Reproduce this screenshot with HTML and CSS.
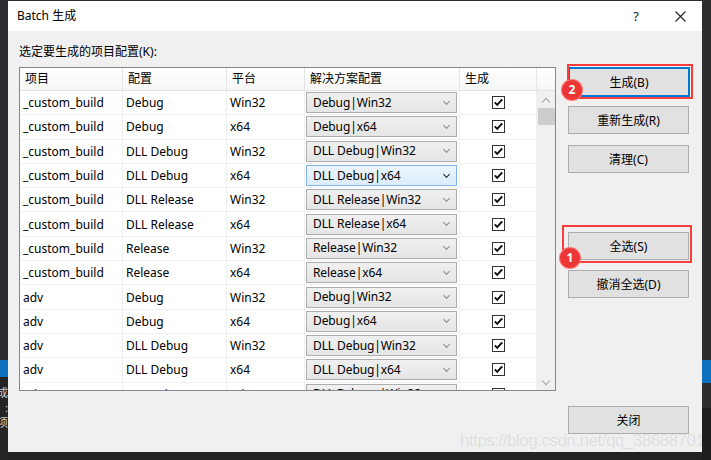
FILE: index.html
```html
<!DOCTYPE html>
<html lang="zh-CN">
<head>
    <meta charset="UTF-8">
    <title>Batch 生成</title>
    <link rel="stylesheet" href="styles.css">
</head>
<body>
<div class="desktop">
    <!-- VS window behind, left edge -->
    <div class="edge-left">
        <div class="edge-dark"></div>
        <div class="edge-blue"></div>
        <div class="edge-text">
            <span>成</span>
            <span>:</span>
            <span>项</span>
        </div>
    </div>

    <div class="middle">
        <div class="top-line"></div>

        <div class="dialog">
            <div class="titlebar">
                <span class="title">Batch 生成</span>
                <span class="help">?</span>
                <svg class="close" width="11" height="11" viewBox="0 0 11 11">
                    <path d="M0.5 0.5 L10.5 10.5 M10.5 0.5 L0.5 10.5" stroke="#222" stroke-width="1.1" fill="none"/>
                </svg>
            </div>

            <div class="content">
                <div class="left">
                    <div class="caption">选定要生成的项目配置(K):</div>

                    <div class="table">
                        <div class="thead">
                            <div class="th">项目</div>
                            <div class="th">配置</div>
                            <div class="th">平台</div>
                            <div class="th">解决方案配置</div>
                            <div class="th">生成</div>
                            <div class="th th-corner"></div>
                        </div>

                        <div class="tbody">
                            <div class="rows">
                                <div class="row">
                                    <div class="cell">_custom_build</div><div class="cell">Debug</div><div class="cell">Win32</div>
                                    <div class="cell cell-combo"><div class="combo"><span>Debug|Win32</span><i class="chev"></i></div></div>
                                    <div class="cell cell-check"><span class="check"></span></div>
                                </div>
                                <div class="row">
                                    <div class="cell">_custom_build</div><div class="cell">Debug</div><div class="cell">x64</div>
                                    <div class="cell cell-combo"><div class="combo"><span>Debug|x64</span><i class="chev"></i></div></div>
                                    <div class="cell cell-check"><span class="check"></span></div>
                                </div>
                                <div class="row">
                                    <div class="cell">_custom_build</div><div class="cell">DLL Debug</div><div class="cell">Win32</div>
                                    <div class="cell cell-combo"><div class="combo"><span>DLL Debug|Win32</span><i class="chev"></i></div></div>
                                    <div class="cell cell-check"><span class="check"></span></div>
                                </div>
                                <div class="row">
                                    <div class="cell">_custom_build</div><div class="cell">DLL Debug</div><div class="cell">x64</div>
                                    <div class="cell cell-combo"><div class="combo combo-hot"><span>DLL Debug|x64</span><i class="chev"></i></div></div>
                                    <div class="cell cell-check"><span class="check"></span></div>
                                </div>
                                <div class="row">
                                    <div class="cell">_custom_build</div><div class="cell">DLL Release</div><div class="cell">Win32</div>
                                    <div class="cell cell-combo"><div class="combo"><span>DLL Release|Win32</span><i class="chev"></i></div></div>
                                    <div class="cell cell-check"><span class="check"></span></div>
                                </div>
                                <div class="row">
                                    <div class="cell">_custom_build</div><div class="cell">DLL Release</div><div class="cell">x64</div>
                                    <div class="cell cell-combo"><div class="combo"><span>DLL Release|x64</span><i class="chev"></i></div></div>
                                    <div class="cell cell-check"><span class="check"></span></div>
                                </div>
                                <div class="row">
                                    <div class="cell">_custom_build</div><div class="cell">Release</div><div class="cell">Win32</div>
                                    <div class="cell cell-combo"><div class="combo"><span>Release|Win32</span><i class="chev"></i></div></div>
                                    <div class="cell cell-check"><span class="check"></span></div>
                                </div>
                                <div class="row">
                                    <div class="cell">_custom_build</div><div class="cell">Release</div><div class="cell">x64</div>
                                    <div class="cell cell-combo"><div class="combo"><span>Release|x64</span><i class="chev"></i></div></div>
                                    <div class="cell cell-check"><span class="check"></span></div>
                                </div>
                                <div class="row">
                                    <div class="cell">adv</div><div class="cell">Debug</div><div class="cell">Win32</div>
                                    <div class="cell cell-combo"><div class="combo"><span>Debug|Win32</span><i class="chev"></i></div></div>
                                    <div class="cell cell-check"><span class="check"></span></div>
                                </div>
                                <div class="row">
                                    <div class="cell">adv</div><div class="cell">Debug</div><div class="cell">x64</div>
                                    <div class="cell cell-combo"><div class="combo"><span>Debug|x64</span><i class="chev"></i></div></div>
                                    <div class="cell cell-check"><span class="check"></span></div>
                                </div>
                                <div class="row">
                                    <div class="cell">adv</div><div class="cell">DLL Debug</div><div class="cell">Win32</div>
                                    <div class="cell cell-combo"><div class="combo"><span>DLL Debug|Win32</span><i class="chev"></i></div></div>
                                    <div class="cell cell-check"><span class="check"></span></div>
                                </div>
                                <div class="row">
                                    <div class="cell">adv</div><div class="cell">DLL Debug</div><div class="cell">x64</div>
                                    <div class="cell cell-combo"><div class="combo"><span>DLL Debug|x64</span><i class="chev"></i></div></div>
                                    <div class="cell cell-check"><span class="check"></span></div>
                                </div>
                                <div class="row">
                                    <div class="cell">adv</div><div class="cell">DLL Release</div><div class="cell">Win32</div>
                                    <div class="cell cell-combo"><div class="combo"><span>DLL Release|Win32</span><i class="chev"></i></div></div>
                                    <div class="cell cell-check"><span class="check"></span></div>
                                </div>
                            </div>

                            <div class="scrollbar">
                                <div class="sb-btn"><i class="sb-arrow sb-up"></i></div>
                                <div class="sb-thumb"></div>
                                <div class="sb-track"></div>
                                <div class="sb-btn"><i class="sb-arrow sb-down"></i></div>
                            </div>
                        </div>
                    </div>
                </div>

                <div class="actions">
                    <div class="mark">
                        <button class="btn btn-default">生成(B)</button>
                        <span class="frame frame-build"></span>
                        <span class="badge badge-build">2</span>
                    </div>
                    <button class="btn btn-rebuild">重新生成(R)</button>
                    <button class="btn btn-clean">清理(C)</button>
                    <div class="mark mark-all">
                        <button class="btn">全选(S)</button>
                        <span class="frame frame-all"></span>
                        <span class="badge badge-all">1</span>
                    </div>
                    <button class="btn btn-none">撤消全选(D)</button>
                    <button class="btn btn-close">关闭</button>
                </div>
            </div>

            <div class="watermark">https://blog.csdn.net/qq_38688701</div>
        </div>

        <div class="edge-bottom"></div>
    </div>

    <!-- VS window behind, right edge -->
    <div class="edge-right">
        <div class="edge-dark"></div>
        <div class="edge-blue edge-blue-r"></div>
        <div class="edge-mid"></div>
        <div class="edge-low"></div>
    </div>
</div>
</body>
</html>
```

FILE: styles.css
```css
body {
    margin: 0;
    background: #2d2d30;
    font-family: "Noto Sans", "Noto Sans CJK SC", sans-serif;
    font-size: 12px;
    color: #000;
}

.desktop {
    display: flex;
    height: 460px;
    overflow: hidden;
}

/* edges of the window behind */
.edge-left {
    width: 8px;
    display: flex;
    flex-direction: column;
}

.edge-dark {
    height: 360px;
    background: #2d2d30;
}

.edge-blue {
    height: 17px;
    background: #0e70c0;
}

.edge-text {
    flex: 1;
    background: #252526;
    color: #d0d0d0;
    display: flex;
    flex-direction: column;
    align-items: flex-end;
    gap: 3px;
    padding-top: 10px;
    font-size: 11px;
    line-height: 12px;
    overflow: hidden;
}

.edge-right {
    flex: 1;
    display: flex;
    flex-direction: column;
}

.edge-blue-r {
    height: 23px;
}

.edge-mid {
    height: 25px;
    background: #2d2d30;
}

.edge-low {
    flex: 1;
    background: #1e1e1e;
}

.middle {
    width: 694px;
    display: flex;
    flex-direction: column;
}

.top-line {
    height: 1px;
    background: #2b2b2b;
}

.edge-bottom {
    flex: 1;
    background: #222223;
}

/* dialog */
.dialog {
    position: relative;
    height: 451px;
    background: #f0f0f0;
    display: flex;
    flex-direction: column;
    overflow: hidden;
}

.titlebar {
    height: 30px;
    background: #fff;
    display: flex;
    align-items: center;
    padding: 0 16px 0 9px;
}

.title {
    line-height: 16px;
}

.help {
    margin-left: auto;
    margin-right: 36px;
    font-size: 13px;
    line-height: 16px;
    color: #222;
}

.content {
    flex: 1;
    display: flex;
    padding-left: 11px;
}

.left {
    width: 537px;
    padding-top: 13px;
}

.caption {
    height: 16px;
    line-height: 16px;
    margin-bottom: 7px;
}

.table {
    box-sizing: border-box;
    height: 324px;
    border: 1px solid #828790;
    background: #fff;
    display: flex;
    flex-direction: column;
}

.thead {
    display: grid;
    grid-template-columns: 103px 104px 78px 155px 77px 18px;
    height: 23px;
    box-sizing: border-box;
    border-bottom: 1px solid #e3e3e3;
    background: linear-gradient(#ffffff, #f6f6f6);
}

.th {
    border-right: 1px solid #e5e5e5;
    padding-left: 5px;
    line-height: 22px;
    white-space: nowrap;
}

.th-corner {
    border-right: none;
}

.tbody {
    flex: 1;
    display: flex;
    overflow: hidden;
}

.rows {
    width: 517px;
    overflow: hidden;
}

.row {
    display: grid;
    grid-template-columns: 103px 104px 78px 155px 77px;
    height: 24.3px;
}

.cell {
    box-sizing: border-box;
    border-right: 1px solid #f0f0f0;
    border-bottom: 1px solid #f0f0f0;
    padding-left: 3px;
    display: flex;
    align-items: center;
    white-space: nowrap;
    overflow: hidden;
}

.cell-combo {
    padding-left: 1px;
}

.combo {
    box-sizing: border-box;
    width: 151px;
    height: 21px;
    border: 1px solid #adadad;
    background: linear-gradient(#f0f0f0, #e5e5e5);
    display: flex;
    align-items: center;
    justify-content: space-between;
    padding: 0 7px 0 6px;
    line-height: 16px;
    letter-spacing: -0.1px;
}

.combo-hot {
    border-color: #7eb4ea;
    background: linear-gradient(#ecf4fc, #dcecfc);
}

.chev {
    width: 4px;
    height: 4px;
    border-right: 1px solid #8a8a8a;
    border-bottom: 1px solid #8a8a8a;
    transform: rotate(45deg);
    margin-top: -3px;
}

.combo-hot .chev {
    border-color: #222;
    border-width: 0 1.5px 1.5px 0;
}

.cell-check {
    justify-content: center;
    padding-left: 0;
}

.check {
    box-sizing: border-box;
    width: 13px;
    height: 13px;
    border: 1px solid #333;
    background: #fff url("data:image/svg+xml,%3Csvg xmlns='http://www.w3.org/2000/svg' width='11' height='11' viewBox='0 0 11 11'%3E%3Cpath d='M1.8 5.4 L4.2 7.9 L9.2 2.3' stroke='%23111' stroke-width='2' fill='none'/%3E%3C/svg%3E") no-repeat center;
}

.scrollbar {
    width: 18px;
    background: #f0f0f0;
    display: flex;
    flex-direction: column;
}

.sb-btn {
    height: 17px;
    display: flex;
    align-items: center;
    justify-content: center;
}

.sb-arrow {
    width: 5px;
    height: 5px;
    border-left: 1px solid #a3a3a3;
    border-top: 1px solid #a3a3a3;
}

.sb-up {
    transform: rotate(45deg);
    margin-top: 4px;
}

.sb-down {
    transform: rotate(225deg);
    margin-top: -2px;
}

.sb-thumb {
    height: 17px;
    margin-left: 1px;
    background: #cdcdcd;
}

.sb-track {
    flex: 1;
}

/* buttons column */
.actions {
    width: 122px;
    margin-left: 12px;
    padding-top: 36px;
    display: flex;
    flex-direction: column;
}

.btn {
    box-sizing: border-box;
    width: 121px;
    height: 28px;
    padding: 0;
    border: 1px solid #adadad;
    background: #e1e1e1;
    font-family: inherit;
    font-size: 12px;
    color: #000;
}

.btn-default {
    width: 122px;
    height: 30px;
    border: 2px solid #0078d7;
}

.btn-rebuild { margin-top: 9px; }
.btn-clean { margin-top: 11px; }
.mark-all { margin-top: 59px; }
.btn-none { margin-top: 10px; }
.btn-close { margin-top: 108px; }

.mark {
    position: relative;
    display: flex;
}

.frame {
    position: absolute;
    border: 2px solid #f73d3d;
}

.frame-build {
    left: -1px;
    top: -3px;
    right: -3px;
    bottom: -2px;
}

.frame-all {
    left: -6px;
    top: -7px;
    right: -2px;
    bottom: -3px;
}

.badge {
    position: absolute;
    width: 20px;
    height: 20px;
    border-radius: 50%;
    background: #ec3636;
    box-shadow: 0 0 0 1px #f77;
    color: #fff;
    font-weight: bold;
    font-size: 12px;
    line-height: 20px;
    text-align: center;
}

.badge-build {
    left: -6px;
    top: 13px;
}

.badge-all {
    left: -8px;
    top: 16px;
}

.watermark {
    position: absolute;
    left: 452px;
    top: 430px;
    font-family: "Liberation Sans", Arial, sans-serif;
    font-size: 17px;
    letter-spacing: -0.5px;
    line-height: 20px;
    white-space: nowrap;
    color: rgba(190, 190, 190, 0.5);
    text-shadow: 0 0 1px #fff;
}
```
